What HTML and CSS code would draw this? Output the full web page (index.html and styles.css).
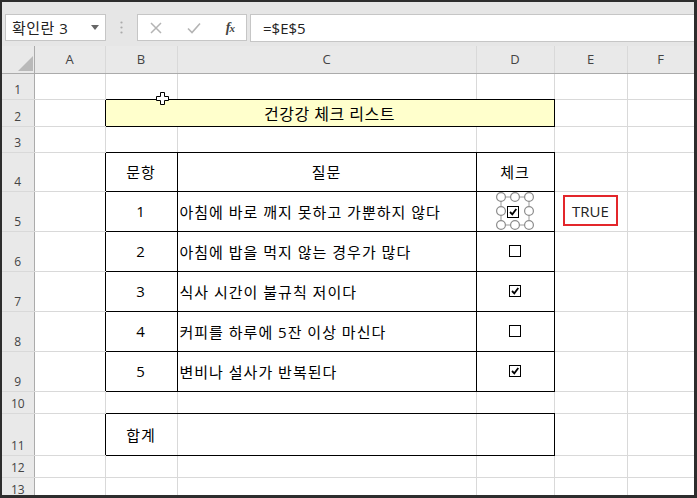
FILE: index.html
```html
<!DOCTYPE html>
<html lang="ko">
<head>
  <meta charset="UTF-8"/>
  <title>건강 체크 리스트</title>
  <link rel="stylesheet" href="styles.css">
</head>
<body>
  <div class="frame">
    <!-- Formula Bar -->
    <div class="formula-bar">
      <div class="name-box">
        <span>확인란 3</span>
        <svg class="caret" width="8" height="5" viewBox="0 0 8 5"><path d="M0 0H8L4 5Z" fill="#666"/></svg>
      </div>
      <div class="grip">
        <svg width="3" height="13" viewBox="0 0 3 13">
          <circle cx="1.5" cy="1.5" r="1.1" fill="#aaa"/>
          <circle cx="1.5" cy="6.5" r="1.1" fill="#aaa"/>
          <circle cx="1.5" cy="11.5" r="1.1" fill="#aaa"/>
        </svg>
      </div>
      <div class="fx-tools">
        <svg width="12" height="12" viewBox="0 0 12 12"><path d="M1 1L11 11M11 1L1 11" stroke="#b4b4b4" stroke-width="1.5"/></svg>
        <svg width="14" height="12" viewBox="0 0 14 12"><path d="M1 6.5L5 10.5L13 1.5" stroke="#b4b4b4" stroke-width="1.6" fill="none"/></svg>
        <span class="fx">f<i>x</i></span>
      </div>
      <div class="formula-input">=$E$5</div>
    </div>

    <!-- Sheet -->
    <table class="sheet">
      <colgroup>
        <col class="c-rh"><col class="c-a"><col class="c-b"><col class="c-c"><col class="c-d"><col class="c-e"><col class="c-f">
      </colgroup>
      <thead>
        <tr>
          <th class="corner"><svg width="15" height="15" viewBox="0 0 15 15"><path d="M15 0V15H0Z" fill="#b9b9b9"/></svg></th>
          <th>A</th><th>B</th><th>C</th><th>D</th><th>E</th><th>F</th>
        </tr>
      </thead>
      <tbody>
        <tr class="r-1">
          <th>1</th><td></td><td class="above"></td><td class="above"></td><td class="above"></td><td></td><td></td>
        </tr>
        <tr class="r-2">
          <th>2</th><td class="left-of"></td><td class="title" colspan="3">건강강 체크 리스트</td><td></td><td></td>
        </tr>
        <tr class="r-3">
          <th>3</th><td></td><td class="above"></td><td class="above"></td><td class="above"></td><td></td><td></td>
        </tr>
        <tr class="r-4">
          <th>4</th><td class="left-of"></td><td class="box center">문항</td><td class="box center">질문</td><td class="box center">체크</td><td></td><td></td>
        </tr>
        <tr class="r-q">
          <th>5</th><td class="left-of"></td><td class="box center">1</td><td class="box text">아침에 바로 깨지 못하고 가뿐하지 않다</td>
          <td class="box center">
            <svg class="selected" width="38" height="38" viewBox="0 0 38 38">
              <rect x="5" y="5" width="28" height="28" fill="none" stroke="#9a9a9a" stroke-width="1"/>
              <circle cx="5" cy="5" r="4.4" fill="#fff" stroke="#8c8c8c" stroke-width="1.2"/>
              <circle cx="19" cy="5" r="4.4" fill="#fff" stroke="#8c8c8c" stroke-width="1.2"/>
              <circle cx="33" cy="5" r="4.4" fill="#fff" stroke="#8c8c8c" stroke-width="1.2"/>
              <circle cx="5" cy="19" r="4.4" fill="#fff" stroke="#8c8c8c" stroke-width="1.2"/>
              <circle cx="33" cy="19" r="4.4" fill="#fff" stroke="#8c8c8c" stroke-width="1.2"/>
              <circle cx="5" cy="33" r="4.4" fill="#fff" stroke="#8c8c8c" stroke-width="1.2"/>
              <circle cx="19" cy="33" r="4.4" fill="#fff" stroke="#8c8c8c" stroke-width="1.2"/>
              <circle cx="33" cy="33" r="4.4" fill="#fff" stroke="#8c8c8c" stroke-width="1.2"/>
              <rect x="11.5" y="14.5" width="11" height="11" fill="#fff" stroke="#000" stroke-width="1"/>
              <path d="M14 20L16.3 22.3L20.3 17" stroke="#000" stroke-width="1.8" fill="none"/>
            </svg>
          </td>
          <td class="center"><span class="result">TRUE</span></td><td></td>
        </tr>
        <tr class="r-q">
          <th>6</th><td class="left-of"></td><td class="box center">2</td><td class="box text">아침에 밥을 먹지 않는 경우가 많다</td>
          <td class="box center"><svg class="check" width="12" height="12" viewBox="0 0 12 12"><rect x="0.5" y="0.5" width="11" height="11" fill="#fff" stroke="#000"/></svg></td>
          <td></td><td></td>
        </tr>
        <tr class="r-q">
          <th>7</th><td class="left-of"></td><td class="box center">3</td><td class="box text">식사 시간이 불규칙 저이다</td>
          <td class="box center"><svg class="check" width="12" height="12" viewBox="0 0 12 12"><rect x="0.5" y="0.5" width="11" height="11" fill="#fff" stroke="#000"/><path d="M3 6L5.3 8.3L9.3 3" stroke="#000" stroke-width="1.8" fill="none"/></svg></td>
          <td></td><td></td>
        </tr>
        <tr class="r-q">
          <th>8</th><td class="left-of"></td><td class="box center">4</td><td class="box text">커피를 하루에 5잔 이상 마신다</td>
          <td class="box center"><svg class="check" width="12" height="12" viewBox="0 0 12 12"><rect x="0.5" y="0.5" width="11" height="11" fill="#fff" stroke="#000"/></svg></td>
          <td></td><td></td>
        </tr>
        <tr class="r-q">
          <th>9</th><td class="left-of"></td><td class="box center">5</td><td class="box text">변비나 설사가 반복된다</td>
          <td class="box center"><svg class="check" width="12" height="12" viewBox="0 0 12 12"><rect x="0.5" y="0.5" width="11" height="11" fill="#fff" stroke="#000"/><path d="M3 6L5.3 8.3L9.3 3" stroke="#000" stroke-width="1.8" fill="none"/></svg></td>
          <td></td><td></td>
        </tr>
        <tr class="r-10">
          <th>10</th><td></td><td class="above"></td><td class="above"></td><td class="above"></td><td></td><td></td>
        </tr>
        <tr class="r-11">
          <th>11</th><td class="left-of"></td><td class="sum-l center">합계</td><td class="sum-m"></td><td class="sum-r"></td><td></td><td></td>
        </tr>
        <tr class="r-12">
          <th>12</th><td></td><td></td><td></td><td></td><td></td><td></td>
        </tr>
        <tr class="r-13">
          <th>13</th><td></td><td></td><td></td><td></td><td></td><td></td>
        </tr>
      </tbody>
    </table>

    <!-- Excel cell cursor -->
    <svg class="cursor" width="13" height="13" viewBox="0 0 13 13">
      <path d="M4.5 0.5H8.5V4.5H12.5V8.5H8.5V12.5H4.5V8.5H0.5V4.5H4.5Z" fill="#fff" stroke="#000" stroke-width="1"/>
    </svg>
  </div>
</body>
</html>
```

FILE: styles.css
```css
:root {
  --frame:     #2d2d2d;
  --toolbar:   #e6e6e6;
  --head:      #e9e9e9;
  --head-line: #ababab;
  --grid:      #d9d9d9;
  --box-line:  #c6c6c6;
  --ink:       #000;
  --label:     #444;
  --title-bg:  #ffffcc;
  --red:       #e3262b;
}
* { box-sizing: border-box; margin:0; padding:0; }
body {
  font-family: "Open Sans", "Noto Sans CJK KR", sans-serif;
  background: #fff;
  color: var(--ink);
}
.frame {
  position: relative;
  width: 697px;
  height: 498px;
  border: 2px solid var(--frame);
  border-right-width: 3px;
  border-bottom-width: 3px;
  overflow: hidden;
  background: #fff;
}

/* formula bar */
.formula-bar {
  height: 44px;
  background: var(--toolbar);
  display: flex;
  align-items: flex-start;
  padding: 12px 0 0 3px;
}
.name-box {
  width: 101px;
  height: 27px;
  background: #fff;
  border: 1px solid var(--box-line);
  display: flex;
  align-items: center;
  justify-content: space-between;
  padding: 0 6px 0 6px;
  font-size: 15px;
  letter-spacing: 0.5px;
  color: #222;
}
.grip {
  width: 31px;
  height: 27px;
  display: flex;
  align-items: center;
  justify-content: center;
}
.fx-tools {
  width: 110px;
  height: 27px;
  background: #fff;
  border: 1px solid var(--box-line);
  display: flex;
  align-items: center;
  justify-content: space-between;
  padding: 0 12px 0 12px;
}
.fx {
  font-family: "Liberation Serif", serif;
  font-style: italic;
  font-weight: bold;
  font-size: 14px;
  color: #444;
  letter-spacing: -1px;
}
.fx i { font-size: 11px; }
.formula-input {
  flex: 1;
  height: 28px;
  margin-left: 3px;
  background: #fff;
  border: 1px solid var(--box-line);
  border-right: none;
  padding-left: 12px;
  line-height: 26px;
  font-size: 15px;
  color: #222;
}

/* sheet */
.sheet {
  border-collapse: collapse;
  table-layout: fixed;
  width: 692px;
}
.c-rh { width: 32px; }
.c-a  { width: 71px; }
.c-b  { width: 72px; }
.c-c  { width: 299px; }
.c-d  { width: 78px; }
.c-e  { width: 73px; }
.c-f  { width: 67px; }

.sheet thead th {
  height: 27px;
  background: var(--head);
  border-right: 1px solid var(--grid);
  border-bottom: 1px solid var(--head-line);
  font-weight: normal;
  font-size: 13px;
  color: var(--label);
}
.sheet thead th.corner {
  border-right: 1px solid var(--head-line);
  text-align: right;
  vertical-align: bottom;
  padding: 0 1px 2px 0;
}
.corner svg { display: block; margin-left: auto; }
.sheet tbody th {
  background: var(--head);
  border-right: 1px solid var(--head-line);
  border-bottom: 1px solid var(--grid);
  font-weight: normal;
  font-size: 12px;
  color: var(--label);
  vertical-align: bottom;
  padding-bottom: 1px;
  line-height: 16px;
}
.sheet td {
  border: 1px solid var(--grid);
  font-size: 15px;
  letter-spacing: 1px;
  padding: 0;
  white-space: nowrap;
  overflow: hidden;
}
.r-1 { height: 26px; }
.r-2 { height: 27px; }
.r-3 { height: 26px; }
.r-4 { height: 39px; }
.r-q { height: 40px; }
.r-10 { height: 22px; }
.r-11 { height: 42px; }
.r-12 { height: 22px; }
.r-13 { height: 22px; }

/* cells next to the black boxes: left/top cell owns the shared edge */
.sheet td.above   { border-bottom-color: var(--ink); }
.sheet td.left-of { border-right-color: var(--ink); }
.sheet td.box     { border-color: var(--ink); }
.sheet td.title {
  border-color: var(--ink);
  background: var(--title-bg);
  text-align: center;
  font-size: 16px;
  letter-spacing: 0.5px;
}
.sheet td.sum-l { border-color: var(--ink); border-right-color: var(--grid); }
.sheet td.sum-m { border-top-color: var(--ink); border-bottom-color: var(--ink); }
.sheet td.sum-r { border-top-color: var(--ink); border-bottom-color: var(--ink); border-right-color: var(--ink); }

.center { text-align: center; }
.text { padding-left: 2px !important; }
.check { display: block; margin: 0 auto; }
.selected { display: block; margin: 0 auto; }

.result {
  display: inline-block;
  width: 55px;
  height: 31px;
  border: 2px solid var(--red);
  line-height: 29px;
  font-size: 15px;
  letter-spacing: 0;
  color: #222;
  margin-top: -2px;
}

.cursor {
  position: absolute;
  left: 154px;
  top: 90px;
}
```
